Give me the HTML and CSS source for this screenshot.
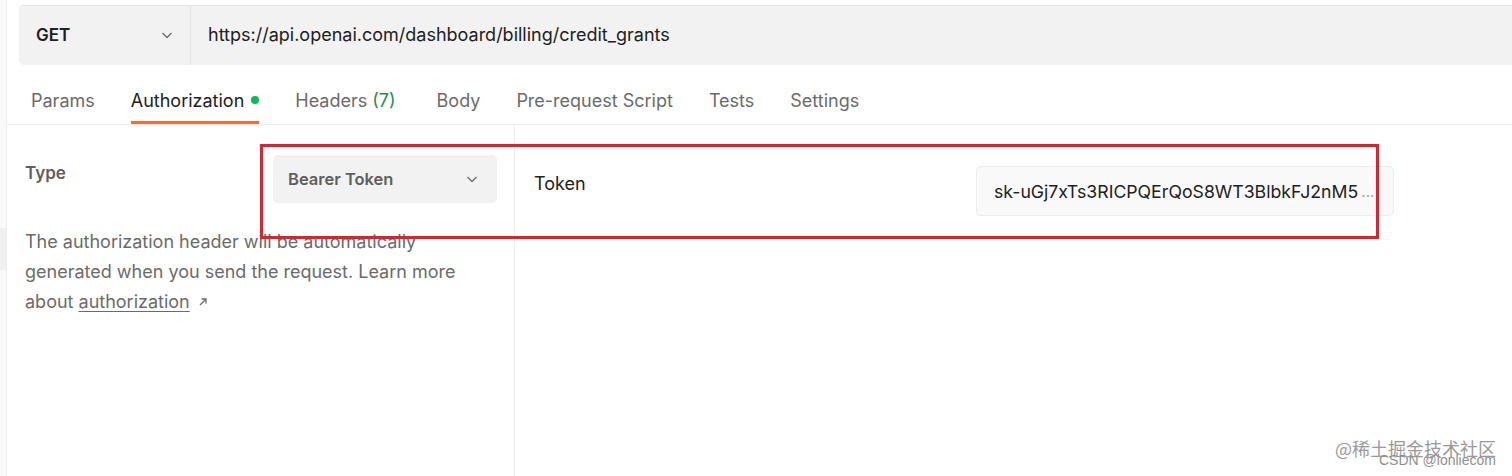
FILE: index.html
```html
<!DOCTYPE html>
<html>
	<head>
		<meta charset="UTF-8" />
		<title>Authorization</title>
		<link rel="stylesheet" href="styles.css">
	</head>
	<body>
		<div class="app">
			<div class="sidebar">
				<div class="sidebar-mark"></div>
			</div>
			<div class="main">
				<div class="url-bar">
					<div class="method">
						<span>GET</span>
						<svg class="chevron" width="14" height="14" viewBox="0 0 14 14"><path d="M2.5 5l4.5 4.5L11.5 5" fill="none" stroke="#6b6b6b" stroke-width="1.3"/></svg>
					</div>
					<div class="url">https://api.openai.com/dashboard/billing/credit_grants</div>
				</div>
				<div class="tabs">
					<div class="tab">Params</div>
					<div class="tab active">Authorization<span class="dot"></span></div>
					<div class="tab headers">Headers <span class="count">(7)</span></div>
					<div class="tab">Body</div>
					<div class="tab">Pre-request Script</div>
					<div class="tab">Tests</div>
					<div class="tab">Settings</div>
				</div>
				<div class="panel">
					<div class="auth-left">
						<div class="type-row">
							<div class="type-label">Type</div>
							<div class="select">
								<span>Bearer Token</span>
								<svg class="chevron" width="14" height="14" viewBox="0 0 14 14"><path d="M2.5 5l4.5 4.5L11.5 5" fill="none" stroke="#6b6b6b" stroke-width="1.3"/></svg>
							</div>
						</div>
						<p class="help">The authorization header will be automatically generated when you send the request. Learn more about <a href="javascript:void(0);">authorization</a><svg class="arrow" width="12" height="12" viewBox="0 0 12 12"><path d="M3 9L9 3M4.5 3H9v4.5" fill="none" stroke="#6b6b6b" stroke-width="1.3"/></svg></p>
					</div>
					<div class="auth-right">
						<div class="token-row">
							<div class="token-label">Token</div>
							<div class="token-input"><span class="token-value">sk-uGj7xTs3RICPQErQoS8WT3BlbkFJ2nM5</span><span class="more">...</span></div>
						</div>
					</div>
				</div>
			</div>
		</div>
		<div class="highlight"></div>
		<div class="watermark">
			<div class="wm-cn">@稀土掘金技术社区</div>
			<div class="wm-en">CSDN @lonliecom</div>
		</div>
	</body>
</html>
```

FILE: styles.css
```css
* {
	margin: 0;
	padding: 0;
	box-sizing: border-box;
}
html, body {
	height: 100%;
}
body {
	font-family: Inter, "Noto Sans", sans-serif;
	font-size: 18px;
	color: #212121;
	background: #fff;
	overflow: hidden;
}
.app {
	display: flex;
	height: 476px;
}
.sidebar {
	width: 7px;
	background: #f9f9f9;
	border-right: 1px solid #ededed;
	padding-top: 228px;
}
.sidebar-mark {
	height: 42px;
	background: #efefef;
}
.main {
	flex: 1;
	display: flex;
	flex-direction: column;
}
.url-bar {
	display: flex;
	height: 60px;
	margin: 5px 0 0 12px;
	background: #f2f2f2;
	border-radius: 5px 0 0 5px;
	border-top: 1px solid #e6e6e6;
}
.method {
	width: 172px;
	display: flex;
	align-items: center;
	justify-content: space-between;
	padding: 0 16px 0 17px;
	border-right: 1px solid #e4e4e4;
	font-weight: 600;
	font-size: 17px;
	color: #212121;
	padding-bottom: 2px;
}
.url {
	display: flex;
	align-items: center;
	padding-left: 17px;
	font-size: 18px;
	color: #212121;
	padding-bottom: 2px;
}
.tabs {
	display: flex;
	gap: 36px;
	height: 60px;
	padding-left: 24px;
	border-bottom: 1px solid #ededed;
}
.tab {
	display: flex;
	align-items: center;
	color: #6b6b6b;
	font-size: 18px;
	border-bottom: 3px solid transparent;
	padding-top: 14px;
}
.tab.headers {
	margin-right: 5px;
}
.tab.active {
	color: #212121;
	border-bottom-color: #f26b3a;
}
.tab .dot {
	width: 8px;
	height: 8px;
	border-radius: 50%;
	background: #0cbb52;
	margin-left: 7px;
}
.tab .count {
	color: #1f8d4c;
	margin-left: 5px;
}
.panel {
	flex: 1;
	display: flex;
}
.auth-left {
	width: 508px;
	border-right: 1px solid #ededed;
	padding: 29px 17px 0 18px;
}
.type-row {
	display: flex;
	justify-content: space-between;
	align-items: flex-start;
}
.type-label {
	font-weight: 600;
	font-size: 17px;
	color: #5f5f5f;
	padding-top: 9px;
}
.select {
	width: 224px;
	height: 48px;
	background: #f2f2f2;
	border-radius: 5px;
	display: flex;
	align-items: center;
	justify-content: space-between;
	padding: 0 18px 0 15px;
	font-weight: 600;
	font-size: 16.5px;
	color: #5f5f5f;
	margin-top: 1px;
}
.help {
	margin-top: 24px;
	font-size: 18px;
	line-height: 30px;
	color: #6b6b6b;
}
.help a {
	color: #6b6b6b;
	text-decoration: underline;
	text-underline-offset: 3px;
}
.help .arrow {
	margin-left: 7px;
	vertical-align: 0;
}
.auth-right {
	flex: 1;
	padding: 41px 118px 0 19px;
}
.token-row {
	display: flex;
	justify-content: space-between;
	align-items: flex-start;
}
.token-label {
	font-size: 18px;
	color: #212121;
	padding-top: 7px;
}
.token-input {
	width: 418px;
	height: 50px;
	background: #f9f9f9;
	border: 1px solid #ededed;
	border-radius: 5px;
	display: flex;
	align-items: center;
	padding-left: 17px;
	font-size: 17.7px;
	color: #212121;
	white-space: nowrap;
	overflow: hidden;
}
.token-input .more {
	color: #a6a6a6;
	margin-left: 3px;
	font-size: 15px;
}
.highlight {
	position: absolute;
	left: 260px;
	top: 144px;
	width: 1119px;
	height: 95px;
	border: 3px solid #e0202e;
}
.watermark {
	position: absolute;
	left: 1335px;
	top: 436px;
	color: #9a9a9a;
}
.wm-cn {
	font-family: "Noto Sans CJK SC", sans-serif;
	font-size: 18px;
	line-height: 24px;
}
.wm-en {
	position: absolute;
	left: 44px;
	top: 16px;
	font-family: "Liberation Sans", sans-serif;
	font-size: 14px;
	color: #8f8f8f;
	white-space: nowrap;
}
```
